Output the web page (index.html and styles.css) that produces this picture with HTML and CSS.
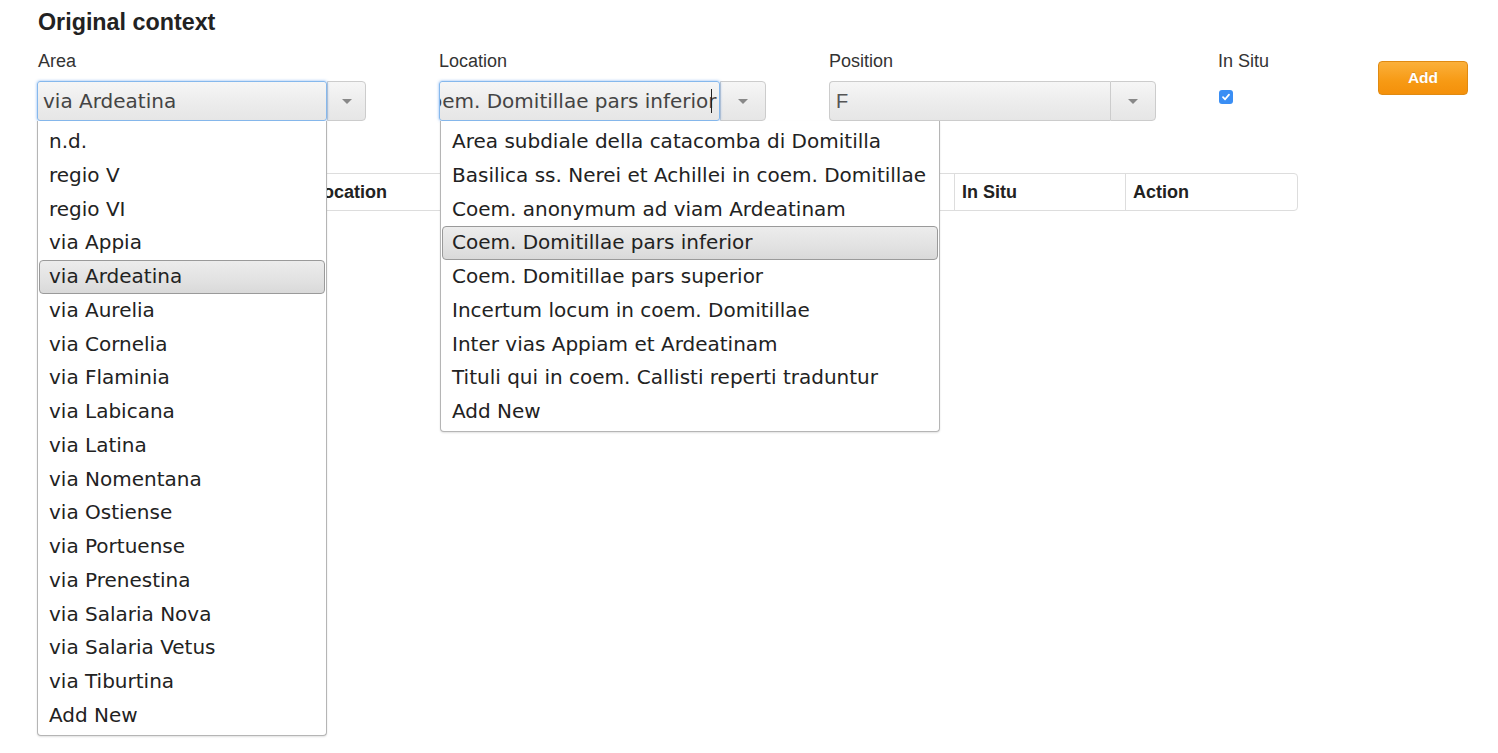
FILE: index.html
```html
<!DOCTYPE html>
<html>
<head>
<meta charset="utf-8">
<link rel="stylesheet" href="styles.css">
</head>
<body>
<div class="page">
  <h3 class="title">Original context</h3>
  <div class="form-row">
    <div class="field">
      <div class="label">Area</div>
      <div class="combo combo-area">
        <div class="combo-input focused"><span class="value">via Ardeatina</span></div>
        <div class="combo-toggle"><span class="caret"></span></div>
        <ul class="menu menu-area">
          <li>n.d.</li>
          <li>regio V</li>
          <li>regio VI</li>
          <li>via Appia</li>
          <li class="active">via Ardeatina</li>
          <li>via Aurelia</li>
          <li>via Cornelia</li>
          <li>via Flaminia</li>
          <li>via Labicana</li>
          <li>via Latina</li>
          <li>via Nomentana</li>
          <li>via Ostiense</li>
          <li>via Portuense</li>
          <li>via Prenestina</li>
          <li>via Salaria Nova</li>
          <li>via Salaria Vetus</li>
          <li>via Tiburtina</li>
          <li>Add New</li>
        </ul>
      </div>
    </div>
    <div class="field">
      <div class="label">Location</div>
      <div class="combo combo-loc">
        <div class="combo-input focused scrolled"><span class="value">Coem. Domitillae pars inferior</span><span class="cursor"></span></div>
        <div class="combo-toggle"><span class="caret"></span></div>
        <ul class="menu menu-loc">
          <li>Area subdiale della catacomba di Domitilla</li>
          <li>Basilica ss. Nerei et Achillei in coem. Domitillae</li>
          <li>Coem. anonymum ad viam Ardeatinam</li>
          <li class="active">Coem. Domitillae pars inferior</li>
          <li>Coem. Domitillae pars superior</li>
          <li>Incertum locum in coem. Domitillae</li>
          <li>Inter vias Appiam et Ardeatinam</li>
          <li>Tituli qui in coem. Callisti reperti traduntur</li>
          <li>Add New</li>
        </ul>
      </div>
    </div>
    <div class="field">
      <div class="label">Position</div>
      <div class="combo combo-pos">
        <div class="combo-input plain"><span class="value">F</span></div>
        <div class="combo-toggle"><span class="caret"></span></div>
      </div>
    </div>
    <div class="field">
      <div class="label">In Situ</div>
      <span class="checkbox"><svg width="10" height="10" viewBox="0 0 10 10"><path d="M2 5.2 L4.1 7.3 L8 2.6" fill="none" stroke="#fff" stroke-width="1.8" stroke-linecap="round" stroke-linejoin="round"/></svg></span>
    </div>
    <div class="field">
      <button class="btn-add">Add</button>
    </div>
  </div>
  <table class="ctx-table">
    <thead>
      <tr>
        <th class="c1">Area</th>
        <th class="c2">Location</th>
        <th class="c3">Position</th>
        <th class="c4">In Situ</th>
        <th class="c5">Action</th>
      </tr>
    </thead>
  </table>
</div>
</body>
</html>
```

FILE: styles.css
```css
html, body {
  margin: 0;
  padding: 0;
  background: #fff;
}
body {
  min-height: 753px;
  font-family: "Liberation Sans", Arial, sans-serif;
  color: #333;
}
.page {
  padding: 9px 0 0 38px;
  min-height: 744px;
}
.title {
  margin: 0;
  font-size: 23.3px;
  line-height: 26px;
  font-weight: bold;
  color: #222;
}
.form-row {
  display: grid;
  grid-template-columns: 402px 390px 389px 160px 90px;
  margin-top: 15px;
  margin-left: -1px;
}
.label {
  font-size: 18px;
  line-height: 22px;
  color: #333;
  margin-bottom: 9px;
}
.form-row .field:first-child .label {
  padding-left: 1px;
}
.combo {
  position: relative;
  display: flex;
  height: 40px;
}
.combo-input {
  box-sizing: border-box;
  height: 40px;
  display: flex;
  align-items: center;
  overflow: hidden;
  border: 1px solid #ccc;
  border-right: none;
  border-radius: 4px 0 0 4px;
  background: linear-gradient(#f6f6f6, #ececec 55%, #e6e6e6);
  font-family: "DejaVu Sans", Verdana, sans-serif;
  font-size: 20px;
  color: #444;
  white-space: nowrap;
}
.combo-input.focused {
  border: 1px solid #86b8ec;
  border-radius: 3px;
  box-shadow: 0 0 3px rgba(82, 150, 236, 0.7);
  position: relative;
  z-index: 2;
}
.combo-area .combo-input { width: 290px; padding-left: 5px; }
.combo-loc .combo-input { width: 281px; padding: 0; }
.combo-loc .value { margin-left: -24px; }
.combo-pos .combo-input { width: 281px; padding-left: 6px; }
.combo-input.plain {
  font-family: "Liberation Sans", Arial, sans-serif;
  color: #555;
}
.value {
  flex: none;
}
.cursor {
  display: inline-block;
  width: 1px;
  height: 24px;
  background: #222;
  margin-left: -6px;
  flex: none;
}
.combo-toggle {
  box-sizing: border-box;
  height: 40px;
  display: flex;
  align-items: center;
  justify-content: center;
  border: 1px solid #ccc;
  border-radius: 0 4px 4px 0;
  background: linear-gradient(#f6f6f6, #ececec 55%, #e6e6e6);
}
.combo-area .combo-toggle { width: 39px; }
.combo-loc .combo-toggle { width: 46px; }
.combo-pos .combo-toggle { width: 46px; }
.caret {
  width: 0;
  height: 0;
  border-left: 5px solid transparent;
  border-right: 5px solid transparent;
  border-top: 5px solid #888;
  margin-top: 1px;
}
.menu {
  position: absolute;
  top: 40px;
  left: 0;
  z-index: 5;
  margin: 0;
  padding: 4px 0 2px;
  list-style: none;
  background: #fff;
  border: 1px solid #b5b5b5;
  border-top: none;
  border-radius: 0 0 4px 4px;
  box-shadow: 0 1px 2px rgba(0,0,0,0.12);
  font-family: "DejaVu Sans", Verdana, sans-serif;
  font-size: 20px;
  color: #222;
}
.menu-area { width: 288px; }
.menu-loc { left: 1px; width: 498px; }
.menu li {
  box-sizing: border-box;
  height: 33.75px;
  line-height: 31.75px;
  padding: 0 9px;
  margin: 0 1px;
  border: 1px solid transparent;
  white-space: nowrap;
}
.menu li.active {
  border: 1px solid #9a9a9a;
  border-radius: 4px;
  background: linear-gradient(#ececec, #e2e2e2 60%, #d9d9d9);
}
.checkbox {
  display: flex;
  align-items: center;
  justify-content: center;
  width: 14px;
  height: 14px;
  margin-top: 18px;
  margin-left: 1px;
  border-radius: 3px;
  background: #3a8ef4;
}
.btn-add {
  display: block;
  width: 90px;
  height: 34px;
  margin-top: 11px;
  padding: 0;
  border: 1px solid #e08a12;
  border-radius: 4px;
  background: linear-gradient(#fbb03b, #f79a14 60%, #f4900a);
  color: #fff;
  font-family: "Liberation Sans", Arial, sans-serif;
  font-size: 15.5px;
  font-weight: bold;
  text-shadow: 0 -1px 0 rgba(0,0,0,0.15);
}
.ctx-table {
  margin-top: 52px;
  width: 1260px;
  border-collapse: separate;
  border-spacing: 0;
  border: 1px solid #ddd;
  border-radius: 4px;
}
.ctx-table th {
  text-align: left;
  font-size: 18px;
  line-height: 20px;
  font-weight: bold;
  color: #222;
  padding: 8px 7px;
  border-left: 1px solid #ddd;
}
.ctx-table th.c1 { border-left: none; width: 251px; }
.ctx-table th.c2 { width: 306px; }
.ctx-table th.c3 { width: 314px; }
.ctx-table th.c4 { width: 156px; }
```
